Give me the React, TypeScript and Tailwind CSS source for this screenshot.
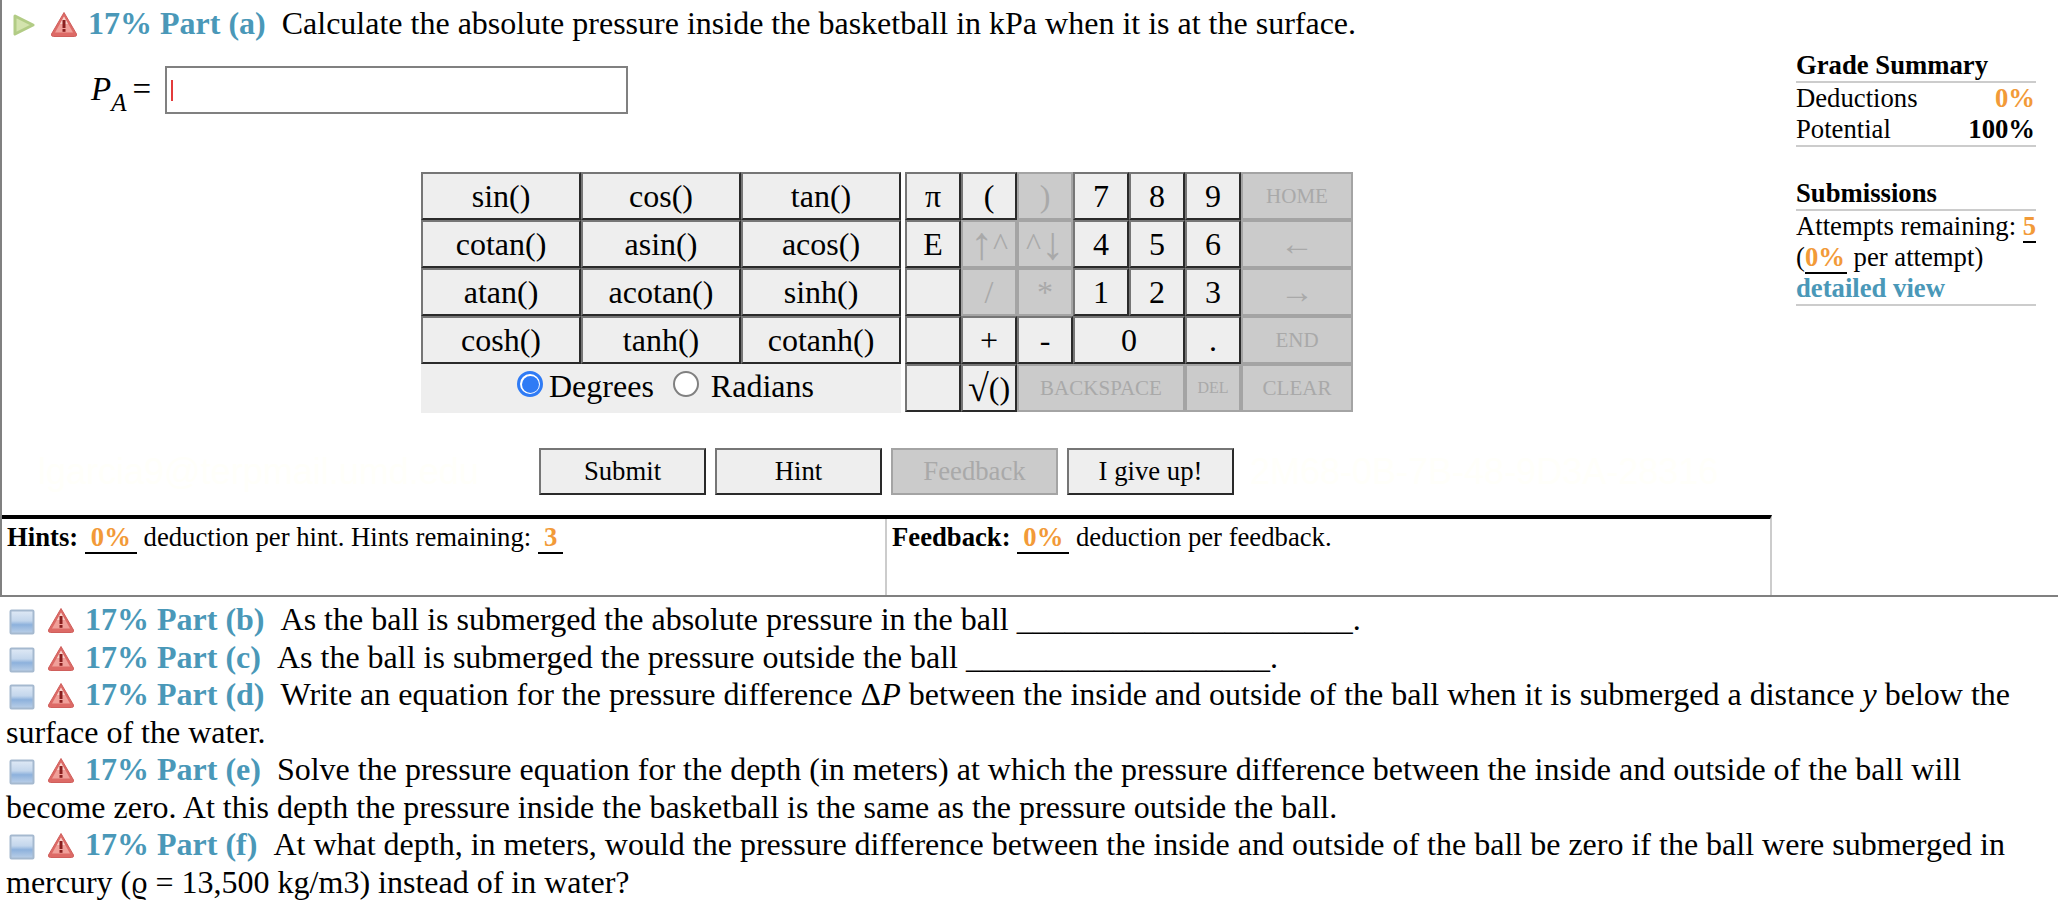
import React from "react";

const Warn = () => (
  <svg width="28" height="27" viewBox="0 0 28 27" className="inline-block align-[-4px] blur-[0.4px]">
    <path d="M14 1.5 L26.5 23 Q27 25.5 24.5 25.5 L3.5 25.5 Q1 25.5 1.5 23 Z" fill="#dd6a66" stroke="#cf5f5c" strokeWidth="1" strokeLinejoin="round" />
    <path d="M14 5.5 L23 21.5 L5 21.5 Z" fill="#f0a09a" />
    <path d="M14 5.5 L18 13 L10 13 Z" fill="#f8d2cc" />
    <rect x="12.5" y="9" width="3" height="8" fill="#8a1f1f" />
    <rect x="12.5" y="18" width="3" height="2.8" fill="#8a1f1f" />
  </svg>
);

const Play = () => (
  <svg width="24" height="26" viewBox="0 0 24 26" className="inline-block align-[-4px] blur-[0.5px]">
    <path d="M3 4 L21 13 L3 22 Z" fill="#d3e3ad" stroke="#b2cc85" strokeWidth="3" strokeLinejoin="round" />
  </svg>
);

const Collapse = ({ id }: { id: string }) => (
  <svg width="26" height="26" viewBox="0 0 26 26" className="inline-block align-[-5px] ml-[3px] blur-[0.4px]">
    <defs>
      <linearGradient id={id} x1="0" y1="0" x2="0" y2="1">
        <stop offset="0" stopColor="#dfe9f5" />
        <stop offset="0.45" stopColor="#c3d6ec" />
        <stop offset="0.62" stopColor="#8db1dc" />
        <stop offset="1" stopColor="#bcd0e8" />
      </linearGradient>
    </defs>
    <rect x="1.5" y="1.5" width="23" height="23" rx="1" fill={`url(#${id})`} stroke="#a5b9cf" strokeWidth="2" />
  </svg>
);

const Val = ({ children }: { children: React.ReactNode }) => (
  <span className="inline-block border-b-2 border-black px-[6px] font-bold text-[#f29a38] leading-[29px]">{children}</span>
);

const Part = ({ label }: { label: string }) => (
  <>
    <span className="font-bold text-[#4a98b8]">17% Part ({label})</span>
    <span>&nbsp;&nbsp;</span>
  </>
);

const Head = ({ id, label }: { id: string; label: string }) => (
  <>
    <Collapse id={id} />
    <span className="inline-block w-[12px]" />
    <Warn />
    <span className="inline-block w-[10px]" />
    <Part label={label} />
  </>
);

const onBtn = "flex items-center justify-center border-2 border-t-[#767676] border-l-[#767676] border-r-[#2a2a2a] border-b-[#2a2a2a] bg-[#eeeeee] text-black";
const offBtn = "flex items-center justify-center border-2 border-[#a4a4a4] bg-[#cbcbcb] text-[#a9a9a9]";

const funcs = ["sin()", "cos()", "tan()", "cotan()", "asin()", "acos()", "atan()", "acotan()", "sinh()", "cosh()", "tanh()", "cotanh()"];

export default function App() {
  return (
    <div className="w-[2058px] h-[906px] overflow-hidden bg-white text-black font-['Liberation_Serif',serif] text-[32px] leading-[37.5px]">
      <section className="h-[597px] border-l-2 border-b-2 border-[#808080] flex">
        <div className="w-[1770px] flex flex-col">
          <div className="h-[48px] pl-[10px] pt-[5px] whitespace-nowrap">
            <Play />
            <span className="inline-block w-[14px]" />
            <Warn />
            <span className="inline-block w-[10px]" />
            <Part label="a" />
            Calculate the absolute pressure inside the basketball in kPa when it is at the surface.
          </div>
          <div className="flex items-center h-[48px] mt-[18px] pl-[89px]">
            <span className="italic text-[33px]">P<sub className="text-[25px] align-[-5px] leading-none">A</sub></span>
            <span className="ml-[6px] text-[33px]">=</span>
            <div className="ml-[14px] w-[463px] h-[48px] border-2 border-[#808080] flex items-center pl-[4px]">
              <div className="w-[2px] h-[21px] bg-[#e33b3b]" />
            </div>
          </div>
          <div className="flex mt-[58px] ml-[419px] gap-[4px] text-[32px] leading-none">
            <div className="w-[480px] flex flex-col">
              <div className="grid grid-cols-[repeat(3,160px)] grid-rows-[repeat(4,48px)]">
                {funcs.map((f) => (
                  <div key={f} className={onBtn}>{f}</div>
                ))}
              </div>
              <div className="h-[49px] bg-[#eeeeee] flex items-center pl-[96px] pb-[9px]">
                <span className="w-[26px] h-[26px] rounded-full border-[3px] border-[#2f7bf5] bg-white flex items-center justify-center">
                  <span className="w-[17px] h-[17px] rounded-full bg-[#2f7bf5]" />
                </span>
                <span className="ml-[6px] pt-[3px]">Degrees</span>
                <span className="ml-[19px] w-[26px] h-[26px] rounded-full border-2 border-[#808080] bg-white" />
                <span className="ml-[12px] pt-[3px]">Radians</span>
              </div>
            </div>
            <div className="grid grid-cols-[repeat(6,56px)_112px] grid-rows-[repeat(5,48px)]">
              <div className={onBtn}>π</div>
              <div className={onBtn}>(</div>
              <div className={offBtn}>)</div>
              <div className={onBtn}>7</div>
              <div className={onBtn}>8</div>
              <div className={onBtn}>9</div>
              <div className={`${offBtn} text-[21px]`}>HOME</div>

              <div className={onBtn}>E</div>
              <div className={offBtn}><span className="text-[46px]">↑</span>^</div>
              <div className={offBtn}>^<span className="text-[46px]">↓</span></div>
              <div className={onBtn}>4</div>
              <div className={onBtn}>5</div>
              <div className={onBtn}>6</div>
              <div className={`${offBtn} text-[34px]`}>←</div>

              <div className={onBtn} />
              <div className={offBtn}>/</div>
              <div className={offBtn}>*</div>
              <div className={onBtn}>1</div>
              <div className={onBtn}>2</div>
              <div className={onBtn}>3</div>
              <div className={`${offBtn} text-[34px]`}>→</div>

              <div className={onBtn} />
              <div className={onBtn}>+</div>
              <div className={onBtn}>-</div>
              <div className={`${onBtn} col-span-2`}>0</div>
              <div className={onBtn}>.</div>
              <div className={`${offBtn} text-[21px]`}>END</div>

              <div className={onBtn} />
              <div className={onBtn}><span className="text-[38px]">√</span>()</div>
              <div className={`${offBtn} col-span-3 text-[21px]`}>BACKSPACE</div>
              <div className={`${offBtn} text-[16px]`}>DEL</div>
              <div className={`${offBtn} text-[21px]`}>CLEAR</div>
            </div>
          </div>
          <div className="flex items-center mt-[35px] h-[47px] text-[26.7px]">
            <div className="w-[537px] pl-[36px] whitespace-nowrap text-[#fffffa] font-['Liberation_Sans',sans-serif] text-[36px]">lgarcia9@terpmail.umd.edu</div>
            <div className="flex gap-[9px]">
              <div className={`${onBtn} w-[167px] h-[47px]`}>Submit</div>
              <div className={`${onBtn} w-[167px] h-[47px]`}>Hint</div>
              <div className={`${offBtn} w-[167px] h-[47px]`}>Feedback</div>
              <div className={`${onBtn} w-[167px] h-[47px]`}>I give up!</div>
            </div>
            <div className="ml-[16px] whitespace-nowrap text-[#fffffa] font-['Liberation_Sans',sans-serif] text-[36px]">2M68-0B-7B-48-9D3A-28316</div>
          </div>
          <div className="mt-[20px] border-t-4 border-black flex flex-1 border-r-2 border-r-[#cccccc] text-[26.7px] leading-[31px]">
            <div className="w-[885px] pl-[5px] pt-[3px] border-r-2 border-[#cccccc]">
              <b>Hints:</b> <Val>0%</Val> deduction per hint. Hints remaining: <Val>3</Val>
            </div>
            <div className="flex-1 pl-[5px] pt-[3px]">
              <b>Feedback:</b> <Val>0%</Val> deduction per feedback.
            </div>
          </div>
        </div>
        <aside className="ml-[24px] w-[240px] pt-[50px] text-[26.7px] leading-[31px]">
          <div className="font-bold border-b-2 border-[#cccccc] h-[33px]">Grade Summary</div>
          <div className="flex justify-between pr-[1px]"><span>Deductions</span><b className="text-[#f29a38]">0%</b></div>
          <div className="flex justify-between pr-[1px] border-b-2 border-[#cccccc]"><span>Potential</span><b>100%</b></div>
          <div className="font-bold border-b-2 border-[#cccccc] mt-[31px] h-[33px]">Submissions</div>
          <div className="whitespace-nowrap">
            Attempts remaining: <span className="font-bold text-[#f29a38] border-b-2 border-black">5</span>
            <br />(<span className="font-bold text-[#f29a38] border-b-2 border-black pr-[2px]">0%</span> per attempt)
          </div>
          <div className="font-bold text-[#4a98b8] border-b-2 border-[#cccccc]">detailed view</div>
        </aside>
      </section>
      <div className="pl-[6px] pr-[10px] pt-[4px]">
        <div><Head id="cb" label="b" />As the ball is submerged the absolute pressure in the ball _____________________.</div>
        <div><Head id="cc" label="c" />As the ball is submerged the pressure outside the ball ___________________.</div>
        <div><Head id="cd" label="d" />Write an equation for the pressure difference Δ<i>P</i> between the inside and outside of the ball when it is submerged a distance <i>y</i> below the surface of the water.</div>
        <div><Head id="ce" label="e" />Solve the pressure equation for the depth (in meters) at which the pressure difference between the inside and outside of the ball will become zero. At this depth the pressure inside the basketball is the same as the pressure outside the ball.</div>
        <div><Head id="cf" label="f" />At what depth, in meters, would the pressure difference between the inside and outside of the ball be zero if the ball were submerged in mercury (ϱ = 13,500 kg/m3) instead of in water?</div>
      </div>
    </div>
  );
}
